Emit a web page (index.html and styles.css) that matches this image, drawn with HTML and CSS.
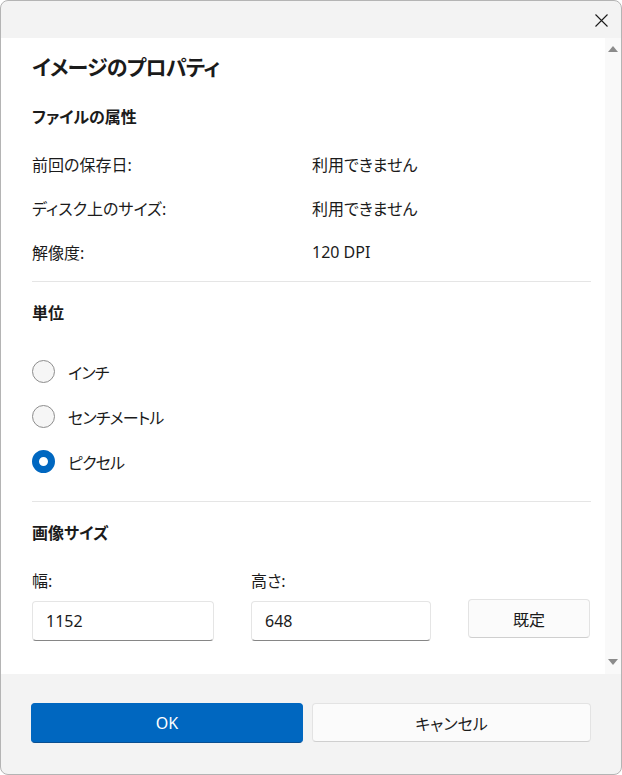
FILE: index.html
```html
<!DOCTYPE html>
<html lang="ja">
<head>
    <meta charset="UTF-8">
    <meta name="viewport" content="width=device-width, initial-scale=1.0">
    <title>イメージのプロパティ</title>
    <link rel="stylesheet" href="styles.css">
</head>
<body>
    <div class="dialog">
        <div class="titlebar">
            <button class="close-btn" aria-label="閉じる">
                <svg width="13" height="13" viewBox="0 0 13 13">
                    <path d="M0.5 0.5 L12.5 12.5 M12.5 0.5 L0.5 12.5" stroke="#1b1b1b" stroke-width="1.1" fill="none"/>
                </svg>
            </button>
        </div>

        <div class="body">
            <div class="content">
                <h1>イメージのプロパティ</h1>

                <h2>ファイルの属性</h2>
                <div class="info-row">
                    <span>前回の保存日:</span>
                    <span>利用できません</span>
                </div>
                <div class="info-row">
                    <span>ディスク上のサイズ:</span>
                    <span>利用できません</span>
                </div>
                <div class="info-row">
                    <span>解像度:</span>
                    <span>120 DPI</span>
                </div>

                <hr class="divider">

                <h2 class="after-divider">単位</h2>
                <div class="radio-group">
                    <label class="radio-row">
                        <input type="radio" name="unit">
                        <span>インチ</span>
                    </label>
                    <label class="radio-row">
                        <input type="radio" name="unit">
                        <span>センチメートル</span>
                    </label>
                    <label class="radio-row">
                        <input type="radio" name="unit" checked>
                        <span>ピクセル</span>
                    </label>
                </div>

                <hr class="divider divider-units">

                <h2 class="after-divider">画像サイズ</h2>
                <div class="size-grid">
                    <span class="field-label">幅:</span>
                    <span class="field-label">高さ:</span>
                    <span></span>
                    <input class="text-field" type="text" value="1152">
                    <input class="text-field" type="text" value="648">
                    <button class="btn btn-default">既定</button>
                </div>
            </div>

            <div class="scrollbar">
                <span class="arrow arrow-up"></span>
                <span class="arrow arrow-down"></span>
            </div>
        </div>

        <div class="footer">
            <button class="btn btn-primary">OK</button>
            <button class="btn btn-default">キャンセル</button>
        </div>
    </div>
</body>
</html>
```

FILE: styles.css
```css
* {
    box-sizing: border-box;
}

body {
    margin: 0;
    background-color: #ffffff;
    font-family: "Noto Sans", "Noto Sans CJK JP", sans-serif;
    font-feature-settings: "palt";
    color: #1b1b1b;
}

.dialog {
    width: 622px;
    height: 775px;
    border: 1px solid #b4b4b4;
    border-radius: 8px;
    overflow: hidden;
    display: flex;
    flex-direction: column;
    background-color: #f3f3f3;
}

/* title bar */
.titlebar {
    height: 37px;
    display: flex;
    justify-content: flex-end;
    align-items: center;
    padding-right: 8px;
}

.close-btn {
    width: 24px;
    height: 24px;
    margin-top: 1px;
    border: none;
    background: none;
    padding: 0;
    display: flex;
    align-items: center;
    justify-content: center;
}

/* scrolling body */
.body {
    height: 636px;
    display: flex;
    background-color: #ffffff;
}

.content {
    flex: 1;
    padding: 15px 14px 0 31px;
}

h1 {
    margin: 0;
    font-size: 21px;
    line-height: 28px;
    font-weight: 700;
    letter-spacing: -0.8px;
}

h2 {
    margin: 25px 0 0;
    font-size: 16px;
    line-height: 22px;
    font-weight: 700;
}

h2.after-divider {
    margin-top: 20px;
}

.info-row {
    display: grid;
    grid-template-columns: 280px 1fr;
    height: 44px;
    align-items: center;
    font-size: 16px;
}

h2 + .info-row {
    margin-top: 14px;
}

.divider {
    margin: 7px 0 0;
    border: none;
    border-top: 1px solid #e5e5e5;
}

.divider-units {
    margin-top: 17px;
}

/* radio buttons */
.radio-group {
    margin-top: 25px;
}

.radio-row {
    display: flex;
    align-items: center;
    height: 45px;
    font-size: 16px;
    letter-spacing: -0.8px;
}

.radio-row input {
    appearance: none;
    width: 23px;
    height: 23px;
    margin: 0 13px 0 0;
    border: 1px solid #8d8d8d;
    border-radius: 50%;
    background-color: #f6f6f6;
}

.radio-row input:checked {
    border: 7px solid #0067c0;
    background-color: #ffffff;
}

/* image size fields */
.size-grid {
    display: grid;
    grid-template-columns: 182px 180px 122px;
    column-gap: 37px;
    row-gap: 9px;
    margin-top: 26px;
    font-size: 16px;
}

.field-label {
    line-height: 22px;
}

.text-field {
    height: 40px;
    padding: 0 13px;
    border: 1px solid #e5e5e5;
    border-bottom-color: #868686;
    border-radius: 4px;
    font-family: inherit;
    font-feature-settings: inherit;
    font-size: 16px;
    color: #1b1b1b;
    background-color: #ffffff;
    outline: none;
}

.size-grid .btn {
    height: 39px;
    margin-top: -2px;
}

/* buttons */
.btn {
    height: 40px;
    border-radius: 4px;
    font-family: inherit;
    font-feature-settings: inherit;
    font-size: 16px;
    color: #1b1b1b;
    padding: 0;
}

.btn-default {
    background-color: #fbfbfb;
    border: 1px solid #e3e3e3;
    border-bottom-color: #cfcfcf;
}

.btn-primary {
    background-color: #0067c0;
    border: 1px solid #0067c0;
    border-bottom-color: #0a4f91;
    color: #ffffff;
}

/* scrollbar */
.scrollbar {
    width: 16px;
    background-color: #f9f9f9;
    display: flex;
    flex-direction: column;
    justify-content: space-between;
    align-items: center;
    padding: 8px 0 9px;
}

.arrow {
    width: 0;
    height: 0;
    border-left: 5px solid transparent;
    border-right: 5px solid transparent;
}

.arrow-up {
    border-bottom: 6px solid #8b8b8b;
}

.arrow-down {
    border-top: 6px solid #8b8b8b;
}

/* footer */
.footer {
    flex: 1;
    display: flex;
    gap: 9px;
    padding: 29px 30px 0 30px;
}

.footer .btn-primary {
    width: 272px;
}

.footer .btn-default {
    flex: 1;
    height: 39px;
}
```
